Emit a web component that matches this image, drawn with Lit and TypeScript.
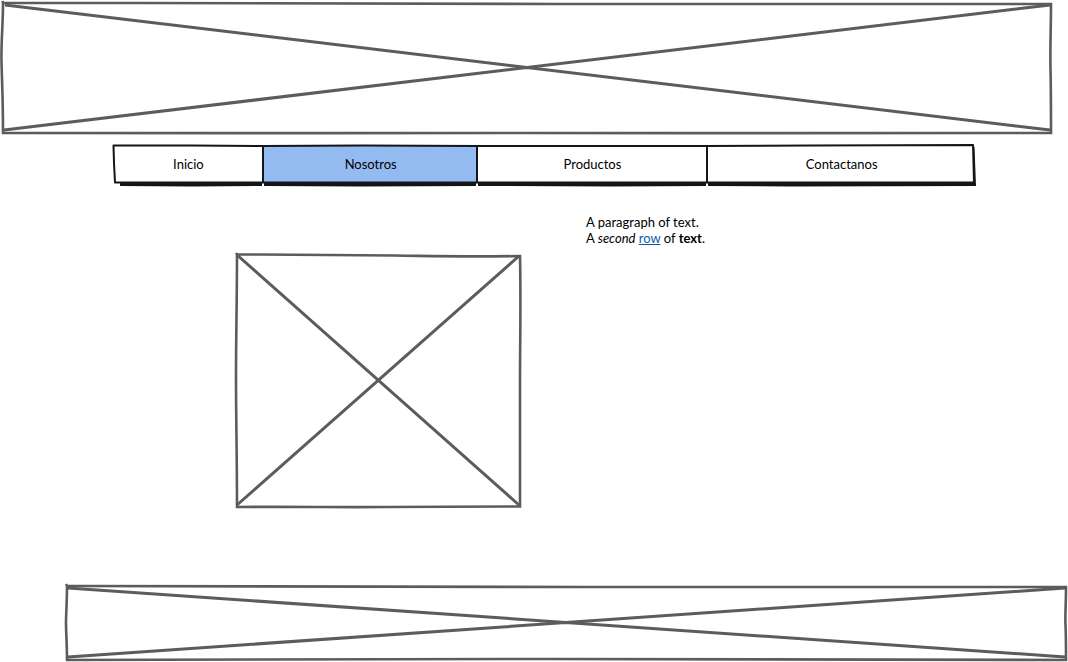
import { LitElement, html, css, svg } from "lit";
import { customElement, property } from "lit/decorators.js";

interface Sketch {
  width: number;
  height: number;
  frame: string;
  cross: string;
}

const sketches: Record<string, Sketch> = {
  banner: {
    width: 1052,
    height: 136,
    frame:
      "M2.5 1 L3 3 C200 3 420 3 560 4 S840 5.5 1051 4 C1051 30 1050 45 1050.5 68 S1051 105 1051 133 C840 133.5 700 133 520 133 S200 133.5 3 133 C3 100 2 82 1.5 62 S3 25 3 3",
    cross: "M5 5 L1050 130 M4 130 L1050 5",
  },
  picture: {
    width: 288,
    height: 257,
    frame:
      "M2 1 L3 2.5 C60 2.5 120 3 160 3.5 S230 5 286 4 C287 50 286 90 286 130 S286 200 286 254.5 C230 255 190 254.5 150 255 S60 254.5 3 255 C3 200 2 170 2 125 S3 50 3 2",
    cross: "M3 3 L285 253 M3 253 L285 4",
  },
  footer: {
    width: 1003,
    height: 79,
    frame:
      "M1 1 L2 3 C200 3 400 3 520 4 S800 5 1001 4 C1001 22 1000 32 1000.5 42 S1001 60 1001 77 C800 77 640 76 480 76 S180 77 2 77 C2 60 1 50 1 40 S2 20 2 2",
    cross: "M3 5 L1000 74 M3 74 L1000 5",
  },
};

@customElement("sketch-placeholder")
class SketchPlaceholder extends LitElement {
  @property() kind = "banner";

  static styles = css`
    :host {
      display: block;
    }
    .drawing {
      display: block;
      width: 100%;
      height: 100%;
      overflow: visible;
    }
    .line {
      fill: none;
      stroke: #5c5b5d;
      stroke-width: 2.6px;
      stroke-linejoin: miter;
      vector-effect: non-scaling-stroke;
    }
    .cross {
      stroke-width: 3px;
    }
  `;

  render() {
    const s = sketches[this.kind];
    return html`<svg class="drawing" viewBox="0 0 ${s.width} ${s.height}" preserveAspectRatio="none" aria-hidden="true">
      ${svg`<path class="line" d=${s.frame}></path><path class="line cross" d=${s.cross}></path>`}
    </svg>`;
  }
}

@customElement("app-root")
class AppRoot extends LitElement {
  static styles = css`
    :host {
      display: flex;
      flex-direction: column;
      min-height: 100vh;
      background: #fff;
      color: #000;
      font: 13px/16px Lato, "Open Sans", sans-serif;
    }
    .banner {
      height: 136px;
      margin-right: 16px;
    }
    .menu {
      display: grid;
      margin: 7px 92px 0 112px;
    }
    .menu-frame,
    .menu-items {
      grid-area: 1 / 1;
    }
    .menu-frame {
      width: 100%;
      height: 44px;
    }
    .selected {
      fill: #94baf2;
    }
    .paper {
      fill: #fff;
    }
    .ink {
      fill: none;
      stroke: #15161c;
      stroke-width: 2px;
      stroke-linejoin: round;
    }
    .shadow {
      fill: #131416;
    }
    .menu-items {
      display: grid;
      grid-template-columns: 151fr 214fr 230fr 269fr;
      padding: 0 0 2px 1px;
    }
    .menu-link {
      display: flex;
      align-items: center;
      justify-content: center;
      color: inherit;
      text-decoration: none;
    }
    .content {
      display: flex;
      align-items: flex-start;
      gap: 64px;
      padding: 27px 16px 0 234px;
    }
    .picture {
      flex: none;
      width: 288px;
      height: 257px;
      margin-top: 38px;
    }
    .text {
      margin: 0;
    }
    .link {
      color: #0b5cad;
    }
    .footer {
      height: 79px;
      margin-top: auto;
      margin-left: 65px;
    }
  `;

  render() {
    return html`
      <header>
        <sketch-placeholder class="banner" kind="banner"></sketch-placeholder>
        <nav class="menu">
          <svg class="menu-frame" viewBox="0 0 864 44" preserveAspectRatio="none" aria-hidden="true">
            <path class="shadow" d="M8 39 H150 V43 L80 43.5 L8 43 Z M152 39 H364 V43 L250 43.5 L152 43 Z M366 39 H594 V43 L500 43.5 L366 43 Z M596 39 H858 V4 L862.5 4 L864 43 L680 43.5 L596 43 Z"></path>
            <path class="paper" d="M2 2.5 L151 3 L861 2 L862 39 H3 Z"></path>
            <path class="selected" d="M151 3 H365 V39 H151 Z"></path>
            <path class="ink" d="M1.5 2.5 L80 2.5 L151 3 L250 2.5 L365 3 L594 3 L700 2.5 L861 2 L862 39.5 L3 39.5 L2 20 Z M151 2 V40 M365 2 V40 M595 2 V40"></path>
          </svg>
          <div class="menu-items">
            <a class="menu-link" href="#inicio">Inicio</a>
            <a class="menu-link" href="#nosotros" aria-current="page">Nosotros</a>
            <a class="menu-link" href="#productos">Productos</a>
            <a class="menu-link" href="#contactanos">Contactanos</a>
          </div>
        </nav>
      </header>
      <main class="content">
        <sketch-placeholder class="picture" kind="picture"></sketch-placeholder>
        <p class="text">A paragraph of text.<br />A <em>second</em> <a class="link" href="#row">row</a> of <strong>text</strong>.</p>
      </main>
      <sketch-placeholder class="footer" kind="footer"></sketch-placeholder>
    `;
  }
}
